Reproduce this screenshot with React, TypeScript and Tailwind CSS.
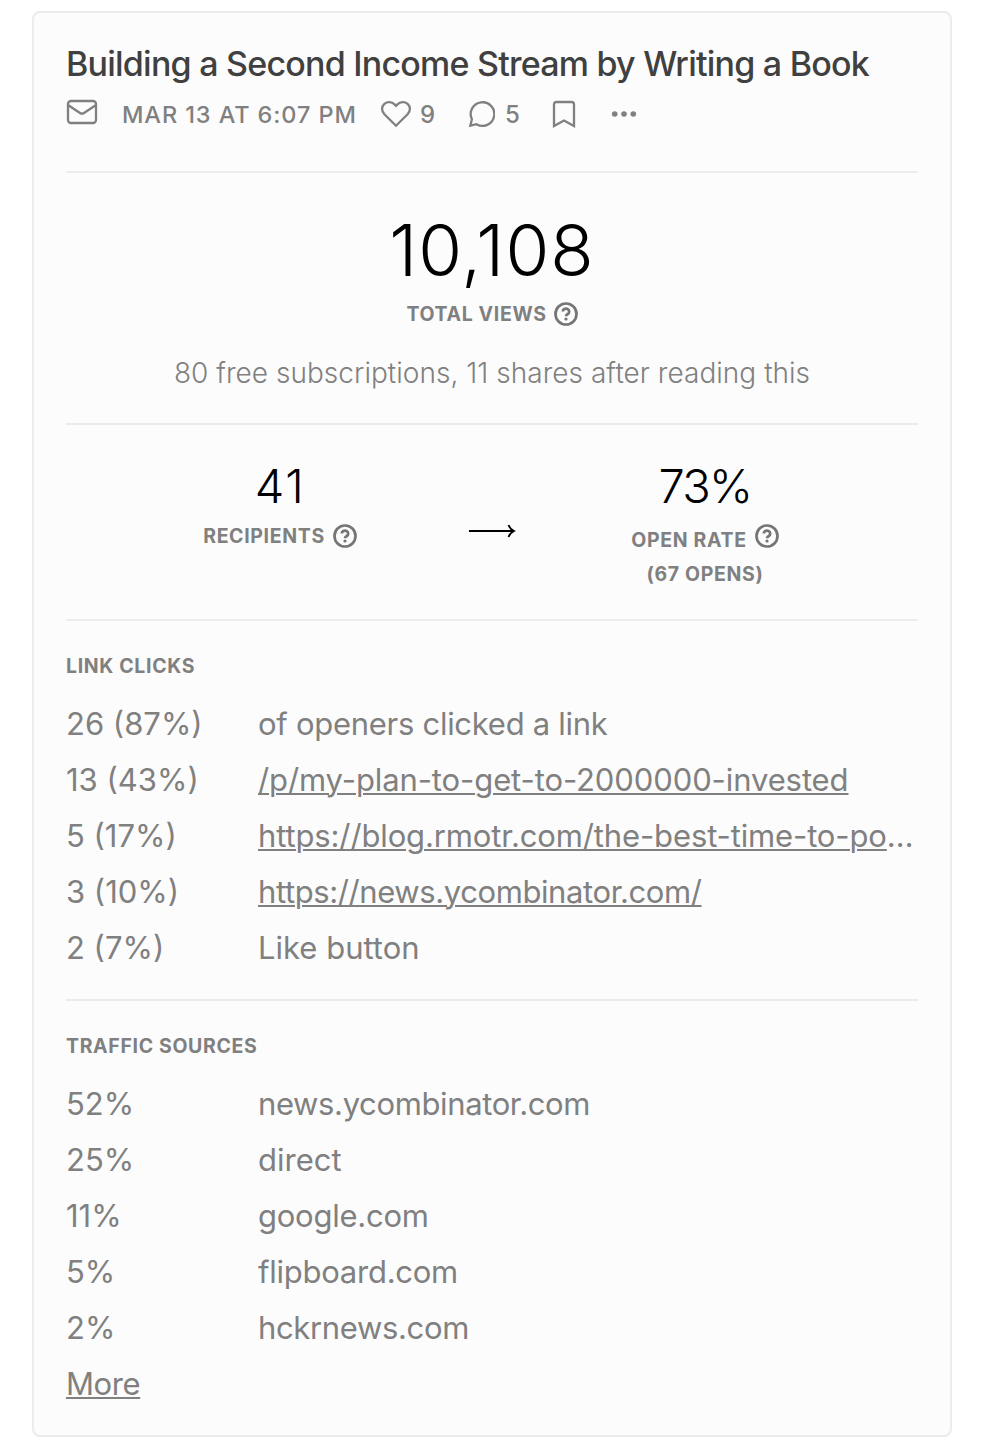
import React from "react";

const linkClicks = [
  { count: "26 (87%)", label: "of openers clicked a link", link: false, cut: false, spacing: "tracking-[-0.28px]" },
  { count: "13 (43%)", label: "/p/my-plan-to-get-to-2000000-invested", link: true, cut: false, spacing: "tracking-[-0.1px]" },
  { count: "5 (17%)", label: "https://blog.rmotr.com/the-best-time-to-po", link: true, cut: true, spacing: "tracking-[-0.13px]" },
  { count: "3 (10%)", label: "https://news.ycombinator.com/", link: true, cut: false, spacing: "tracking-[-0.4px]" },
  { count: "2 (7%)", label: "Like button", link: false, cut: false, spacing: "tracking-normal" },
];

const trafficSources = [
  { share: "52%", source: "news.ycombinator.com", spacing: "tracking-[-0.37px]" },
  { share: "25%", source: "direct", spacing: "tracking-normal" },
  { share: "11%", source: "google.com", spacing: "tracking-[-0.25px]" },
  { share: "5%", source: "flipboard.com", spacing: "tracking-[-0.25px]" },
  { share: "2%", source: "hckrnews.com", spacing: "tracking-[-0.35px]" },
];

const HelpIcon = () => (
  <svg width="24" height="24" viewBox="0 0 24 24" fill="none" stroke="#757575" className="shrink-0">
    <circle cx="12" cy="12" r="10.5" strokeWidth="2.7" />
    <path d="M8.8 9.6a3.2 3 0 1 1 4.900 2.500c-1 .65-1.700 1-1.700 2.100" strokeWidth="2.700" />
    <circle cx="12" cy="17" r="1.600" fill="#757575" stroke="none" />
  </svg>
);

const Divider = () => <div className="h-0.5 bg-[#ececec]" />;

const label = "text-[19.5px] leading-6 font-bold tracking-[0.65px] text-[#808080] uppercase";
const anchor = "underline decoration-2 underline-offset-2";

export default function App() {
  return (
    <div className="h-[1438px] bg-white pt-[11px] pl-8 font-['Inter',sans-serif]">
      <div className="h-[1426px] w-[920px] rounded-lg border-2 border-[#ececec] bg-[#fcfcfc] px-8 text-[#808080]">
        <div className="h-[158px] pt-[27px]">
          <h1 className="text-[34px] leading-[48px] font-medium tracking-[-0.77px] whitespace-nowrap text-[#404040]">
            Building a Second Income Stream by Writing a Book
          </h1>
          <div className="flex h-[52px] items-center text-[24px] leading-8">
            <svg width="32" height="28" viewBox="0 0 32 28" fill="none" stroke="#808080" strokeWidth="2.3" className="mb-1">
              <rect x="2" y="3" width="28" height="22" rx="3" />
              <path d="M2 7l12 8q2 1.3 4 0l12-8" />
            </svg>
            <span className="mt-0.5 ml-6 w-[234px] text-[23.5px] font-[450] tracking-[0.9px] whitespace-nowrap">
              MAR 13 AT 6:07 PM
            </span>
            <svg width="32" height="28" viewBox="0 0 32 28" fill="none" stroke="#808080" strokeWidth="2.3" className="ml-6">
              <path d="M16 25.7L4.4 14.2C1.3 11.1 1.3 6.5 4.4 3.8c3-2.7 7.4-2.1 10.1.6L16 5.9l1.5-1.5c2.7-2.7 7.1-3.3 10.1-.6 3.1 2.7 3.1 7.3 0 10.4z" />
            </svg>
            <span className="mt-0.5 ml-2 w-4 font-[450]">9</span>
            <svg width="28" height="28" viewBox="0 0 28 28" fill="none" stroke="#808080" strokeWidth="2.3" className="ml-[31px]">
              <path d="M3.300 25.700l1.600-6.500A11.800 11.800 0 1 1 9.500 24.200z" />
            </svg>
            <span className="mt-0.5 ml-2.5 w-4 font-[450]">5</span>
            <svg width="24" height="28" viewBox="0 0 24 28" fill="none" stroke="#808080" strokeWidth="2.3" className="ml-[31px]">
              <path d="M2 26V4.5Q2 2 4.500 2h15Q22 2 22 4.500V26l-10-5.500z" />
            </svg>
            <svg width="26" height="8" viewBox="0 0 26 8" fill="#808080" className="ml-[35px]">
              <circle cx="3.700" cy="4" r="2.800" />
              <circle cx="13" cy="4" r="2.800" />
              <circle cx="22.300" cy="4" r="2.800" />
            </svg>
          </div>
        </div>

        <Divider />
        <div className="flex h-[250px] flex-col items-center pt-[33px]">
          <div className="text-[71px] leading-[88px] font-light tracking-[1.1px] text-black">10,108</div>
          <div className="mt-2 flex items-center">
            <span className={label}>Total views</span>
            <span className="ml-[7px]"><HelpIcon /></span>
          </div>
          <div className="mt-[27px] text-[28px] leading-10 font-[330] tracking-[0.03px] whitespace-nowrap">
            80 free subscriptions, 11 shares after reading this
          </div>
        </div>

        <Divider />
        <div className="flex h-[194px] justify-center pt-[33px]">
          <div className="flex w-[376px] flex-col items-center">
            <div className="text-[47px] leading-[56px] font-light tracking-[1.5px] text-black">41</div>
            <div className="mt-2.5 flex items-center">
              <span className={label}>Recipients</span>
              <span className="ml-2"><HelpIcon /></span>
            </div>
          </div>
          <svg width="48" height="16" viewBox="0 0 48 16" fill="none" stroke="#000" className="mt-[65px]">
            <path d="M1 8h45" strokeWidth="2.200" />
            <path d="M40.500 2q1.500 4 5.500 6-4 2-5.500 6" strokeWidth="1.800" />
          </svg>
          <div className="flex w-[376px] flex-col items-center pl-0.5">
            <div className="text-[47px] leading-[56px] font-light tracking-[-1.7px] text-black">73%</div>
            <div className="mt-2.5 flex items-start">
              <span className={`${label} mt-1`}>Open rate</span>
              <span className="ml-2"><HelpIcon /></span>
            </div>
            <div className={`${label} mt-[10px]`}>(67 opens)</div>
          </div>
        </div>

        <Divider />
        <div className="h-[378px] pt-[33px]">
          <div className={label}>Link clicks</div>
          <div className="mt-[18px] text-[31px] leading-[56px] whitespace-nowrap">
            {linkClicks.map((item) => (
              <div key={item.count} className="flex h-14">
                <div className="w-48 shrink-0">{item.count}</div>
                <div className={item.spacing}>
                  {item.link ? <a className={anchor}>{item.label}</a> : item.label}
                  {item.cut && <span className="tracking-[-1px]">…</span>}
                </div>
              </div>
            ))}
          </div>
        </div>

        <Divider />
        <div className="pt-[33px]">
          <div className={label}>Traffic sources</div>
          <div className="mt-[18px] text-[31px] leading-[56px]">
            {trafficSources.map((item) => (
              <div key={item.source} className="flex h-14">
                <div className="w-48 shrink-0">{item.share}</div>
                <div className={item.spacing}>{item.source}</div>
              </div>
            ))}
            <a className={`${anchor} tracking-[-0.4px]`}>More</a>
          </div>
        </div>
      </div>
    </div>
  );
}
